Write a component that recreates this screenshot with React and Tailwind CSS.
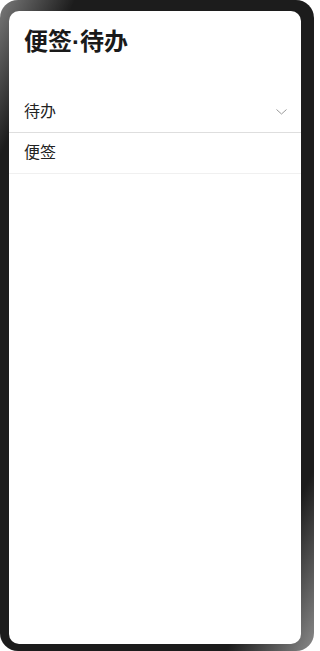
export default function App() {
  return (
    <div className="w-[314px] h-[651px] bg-white">
      <div className="w-full h-full rounded-[18px] pl-[9px] pr-[13px] pt-[11px] pb-[7px] bg-[linear-gradient(to_bottom_right,#7a7a7a_0%,#1c1c1c_12%,#1c1c1c_86%,#8a8a8a_100%)]">
        <div
          className="w-full h-full bg-white rounded-[10px] overflow-hidden flex flex-col"
          style={{ fontFamily: '"Liberation Sans", "Noto Sans CJK SC", sans-serif' }}
        >
          <div className="px-[15px] pt-[15px] h-[81px]">
            <h1 className="text-[24px] leading-[32px] font-bold text-[#1a1a1a]">便签·待办</h1>
          </div>
          <div className="h-[41px] flex items-center justify-between pl-[15px] pr-[14px] border-b border-[#dedede]">
            <span className="text-[16px] text-[#222]">待办</span>
            <svg width="11" height="6" viewBox="0 0 11 6" fill="none">
              <path d="M0.5 0.5 L5.5 5 L10.5 0.5" stroke="#9a9a9a" strokeWidth="1" />
            </svg>
          </div>
          <div className="h-[41px] flex items-center pl-[15px] border-b border-[#f0f0f0]">
            <span className="text-[16px] text-[#222]">便签</span>
          </div>
          <div className="flex-1" />
        </div>
      </div>
    </div>
  );
}
